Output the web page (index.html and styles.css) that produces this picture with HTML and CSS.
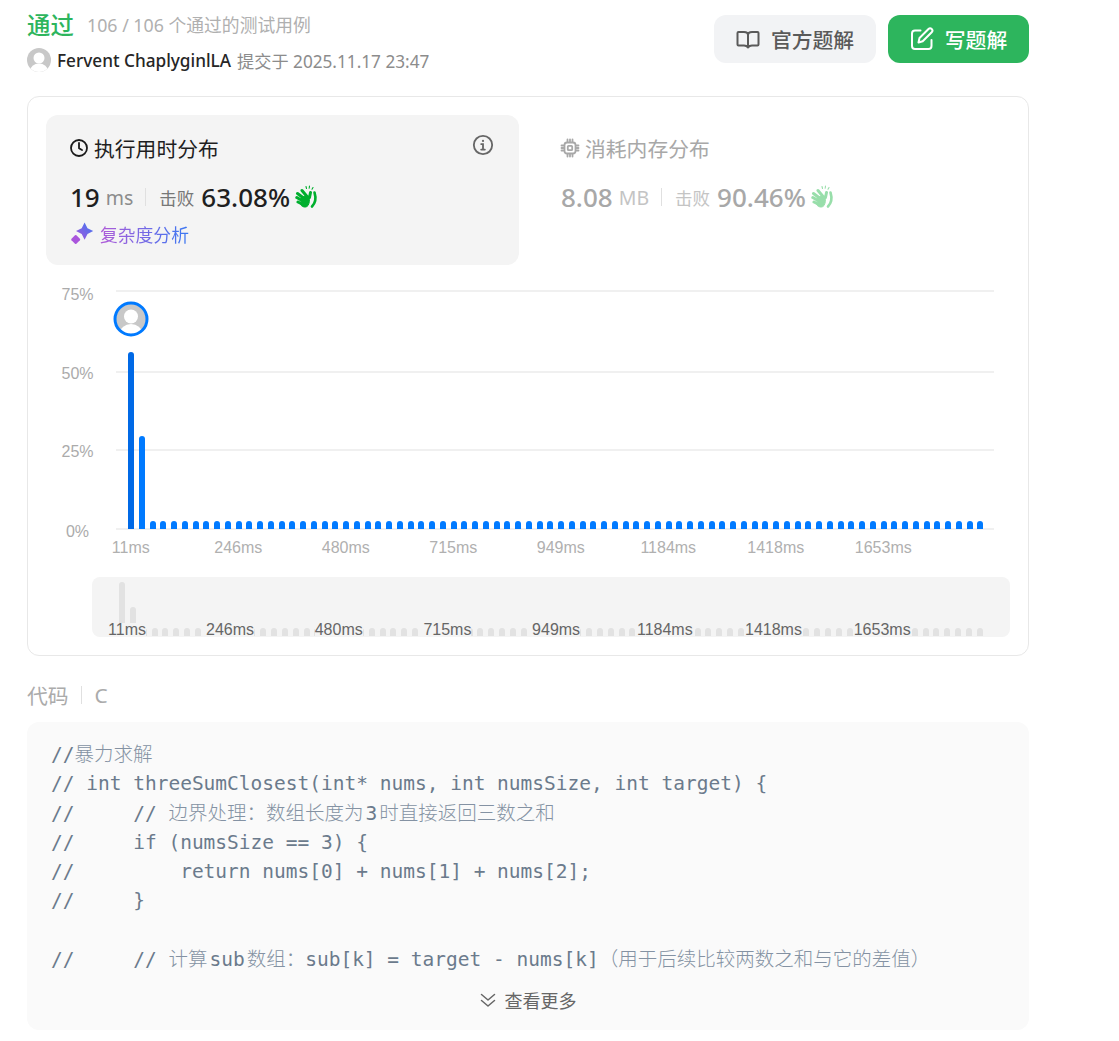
FILE: index.html
```html
<!DOCTYPE html>
<html lang="zh-CN">
<head>
<meta charset="utf-8">
<title>通过</title>
<link rel="stylesheet" href="styles.css">
</head>
<body>
<main class="page">
  <header class="head">
    <div class="head-info">
      <div class="status-row"><span class="status">通过</span><span class="cases">106 / 106 个通过的测试用例</span></div>
      <div class="author-row">
        <svg class="avatar" viewBox="0 0 24 24"><defs><clipPath id="a1"><circle cx="12" cy="12" r="12"/></clipPath></defs><g clip-path="url(#a1)"><rect width="24" height="24" fill="#c8c8c8"/><circle cx="12" cy="10" r="5.5" fill="#fff"/><ellipse cx="12" cy="23" rx="9" ry="7.5" fill="#fff"/></g></svg>
        <span class="author">Fervent ChaplyginlLA</span><span class="submitted">提交于 2025.11.17 23:47</span>
      </div>
    </div>
    <div class="actions">
      <button class="btn btn-gray"><svg class="btn-icon" viewBox="0 0 24 24" fill="none" stroke="currentColor" stroke-width="2" stroke-linejoin="round" stroke-linecap="round"><path d="M12 8c0-2-1.800-3-4-3H2.500a1 1 0 0 0-1 1v11.500a1 1 0 0 0 1 1H8c2 0 3.200.7 4 2zM12 8c0-2 1.800-3 4-3h5.500a1 1 0 0 1 1 1v11.500a1 1 0 0 1-1 1H16c-2 0-3.200.7-4 2z"/></svg>官方题解</button>
      <button class="btn btn-green"><svg class="btn-icon" viewBox="0 0 24 24" fill="none" stroke="currentColor" stroke-width="2" stroke-linejoin="round" stroke-linecap="round"><path d="M10.500 3.500H5a3 3 0 0 0-3 3V19a3 3 0 0 0 3 3h13.500a3 3 0 0 0 3-3v-6M8.500 15.500l1-4.500 9-9a2.200 2.200 0 0 1 3.200 3.200l-9 9z"/></svg>写题解</button>
    </div>
  </header>

  <section class="card">
    <div class="tabs">
      <div class="tab tab-active">
        <div class="tab-title"><svg class="tab-icon" viewBox="0 0 20 20" fill="none" stroke="#1a1a1a" stroke-width="1.800" stroke-linecap="round" stroke-linejoin="round"><circle cx="10" cy="10" r="8"/><path d="M10 5v5.300l3 1.700"/></svg>执行用时分布</div>
        <div class="metric"><span class="value">19</span><span class="unit">ms</span><span class="sep"></span><span class="beat">击败</span><span class="value">63.08%</span>
          <svg class="clap" viewBox="0 0 24 24" fill="none" stroke="#00af2e" stroke-linecap="round"><g stroke-width="3"><path d="M2.500 8.500l6 4.500M1.800 12.500l6 3.500M3 17l5 2.500M7 5.500l5 6M15.500 7.500l-1 5"/></g><path d="M7 12.500l3-1.500 4 1c.8 3 .5 6-1 8.500-2 2.500-5 1.800-7-.3z" fill="#00af2e" stroke="#00af2e"/><path d="M19.500 7.500c1.700 5.500 1.500 10-2.500 14" stroke-width="2.600"/><path d="M11 1.500l.5 2M14.500 1l-.3 2.200M18 2.500l-1 1.700" stroke-width="1.100"/></svg>
        </div>
        <div class="analysis"><svg class="spark" viewBox="0 0 24 24"><defs><linearGradient id="g1" x1="0" y1="1" x2="1" y2="0"><stop offset="0" stop-color="#a955dc"/><stop offset="1" stop-color="#3a78f2"/></linearGradient></defs><path fill="url(#g1)" d="M14.600.5l2.900 5.700 5.700 2.900-5.700 2.900-2.900 5.700-2.900-5.700L6 9.100l5.700-2.900z"/><path fill="#a955dc" d="M5 13.300a1 1 0 0 1 1.400 0l3.500 3.500a1 1 0 0 1 0 1.400l-3.500 3.500a1 1 0 0 1-1.400 0l-3.500-3.500a1 1 0 0 1 0-1.400z"/></svg><span class="analysis-text">复杂度分析</span></div>
        <svg class="info" viewBox="0 0 24 24" fill="none" stroke="#666" stroke-width="2" stroke-linecap="round"><circle cx="12" cy="12" r="10"/><path d="M10 11h2v6M10 17h4"/><circle cx="12" cy="7.500" r="1.200" fill="#666" stroke="none"/></svg>
      </div>
      <div class="tab tab-muted">
        <div class="tab-title"><svg class="tab-icon" viewBox="0 0 20 20" fill="none" stroke="currentColor" stroke-width="1.800" stroke-linecap="round"><rect x="4.500" y="4.500" width="11" height="11" rx="2.500"/><rect x="7.800" y="7.800" width="4.400" height="4.400" rx=".8"/><path d="M1.500 7.500h2M1.500 10h2M1.500 12.500h2M16.500 7.500h2M16.500 10h2M16.500 12.500h2M7.500 1.500v2M10 1.500v2M12.500 1.500v2M7.500 16.500v2M10 16.500v2M12.500 16.500v2"/></svg>消耗内存分布</div>
        <div class="metric"><span class="value">8.08</span><span class="unit">MB</span><span class="sep"></span><span class="beat">击败</span><span class="value">90.46%</span>
          <svg class="clap" viewBox="0 0 24 24" fill="none" stroke="#00af2e" stroke-linecap="round"><g stroke-width="3"><path d="M2.500 8.500l6 4.500M1.800 12.500l6 3.500M3 17l5 2.500M7 5.500l5 6M15.500 7.500l-1 5"/></g><path d="M7 12.500l3-1.500 4 1c.8 3 .5 6-1 8.500-2 2.500-5 1.800-7-.3z" fill="#00af2e" stroke="#00af2e"/><path d="M19.500 7.500c1.700 5.500 1.500 10-2.500 14" stroke-width="2.600"/><path d="M11 1.500l.5 2M14.500 1l-.3 2.200M18 2.500l-1 1.700" stroke-width="1.100"/></svg>
        </div>
      </div>
    </div>

    <div class="chart">
      <div class="rows">
        <div class="row"><span class="y-label y-top">75%</span><span class="line"></span></div>
        <div class="row"><span class="y-label">50%</span><span class="line"></span></div>
        <div class="row"><span class="y-label">25%</span><span class="line"></span></div>
        <div class="row"><span class="y-label y-zero">0%</span><span class="line"></span></div>
      </div>
      <div class="bars">
        <i class="bar bar-a"></i><i class="bar bar-b"></i>
        <i class="bar"></i><i class="bar"></i><i class="bar"></i><i class="bar"></i><i class="bar"></i><i class="bar"></i><i class="bar"></i><i class="bar"></i>
        <i class="bar"></i><i class="bar"></i><i class="bar"></i><i class="bar"></i><i class="bar"></i><i class="bar"></i><i class="bar"></i><i class="bar"></i><i class="bar"></i><i class="bar"></i>
        <i class="bar"></i><i class="bar"></i><i class="bar"></i><i class="bar"></i><i class="bar"></i><i class="bar"></i><i class="bar"></i><i class="bar"></i><i class="bar"></i><i class="bar"></i>
        <i class="bar"></i><i class="bar"></i><i class="bar"></i><i class="bar"></i><i class="bar"></i><i class="bar"></i><i class="bar"></i><i class="bar"></i><i class="bar"></i><i class="bar"></i>
        <i class="bar"></i><i class="bar"></i><i class="bar"></i><i class="bar"></i><i class="bar"></i><i class="bar"></i><i class="bar"></i><i class="bar"></i><i class="bar"></i><i class="bar"></i>
        <i class="bar"></i><i class="bar"></i><i class="bar"></i><i class="bar"></i><i class="bar"></i><i class="bar"></i><i class="bar"></i><i class="bar"></i><i class="bar"></i><i class="bar"></i>
        <i class="bar"></i><i class="bar"></i><i class="bar"></i><i class="bar"></i><i class="bar"></i><i class="bar"></i><i class="bar"></i><i class="bar"></i><i class="bar"></i><i class="bar"></i>
        <i class="bar"></i><i class="bar"></i><i class="bar"></i><i class="bar"></i><i class="bar"></i><i class="bar"></i><i class="bar"></i><i class="bar"></i><i class="bar"></i><i class="bar"></i>
      </div>
      <svg class="pin" viewBox="0 0 36 36"><defs><clipPath id="a2"><circle cx="18" cy="18" r="15"/></clipPath></defs><g clip-path="url(#a2)"><rect width="36" height="36" fill="#c8c8c8"/><circle cx="18" cy="15.500" r="7" fill="#fff"/><ellipse cx="18" cy="32" rx="11" ry="9" fill="#fff"/></g><circle cx="18" cy="18" r="16" fill="none" stroke="#007aff" stroke-width="3"/></svg>
      <div class="x-labels">
        <span>11ms</span><span>246ms</span><span>480ms</span><span>715ms</span><span>949ms</span><span>1184ms</span><span>1418ms</span><span>1653ms</span>
      </div>
      <div class="mini">
        <div class="mini-bars">
          <i class="mbar mbar-a"></i><i class="mbar mbar-b"></i>
          <i class="mbar"></i><i class="mbar"></i><i class="mbar"></i><i class="mbar"></i><i class="mbar"></i><i class="mbar"></i><i class="mbar"></i><i class="mbar"></i>
          <i class="mbar"></i><i class="mbar"></i><i class="mbar"></i><i class="mbar"></i><i class="mbar"></i><i class="mbar"></i><i class="mbar"></i><i class="mbar"></i><i class="mbar"></i><i class="mbar"></i>
          <i class="mbar"></i><i class="mbar"></i><i class="mbar"></i><i class="mbar"></i><i class="mbar"></i><i class="mbar"></i><i class="mbar"></i><i class="mbar"></i><i class="mbar"></i><i class="mbar"></i>
          <i class="mbar"></i><i class="mbar"></i><i class="mbar"></i><i class="mbar"></i><i class="mbar"></i><i class="mbar"></i><i class="mbar"></i><i class="mbar"></i><i class="mbar"></i><i class="mbar"></i>
          <i class="mbar"></i><i class="mbar"></i><i class="mbar"></i><i class="mbar"></i><i class="mbar"></i><i class="mbar"></i><i class="mbar"></i><i class="mbar"></i><i class="mbar"></i><i class="mbar"></i>
          <i class="mbar"></i><i class="mbar"></i><i class="mbar"></i><i class="mbar"></i><i class="mbar"></i><i class="mbar"></i><i class="mbar"></i><i class="mbar"></i><i class="mbar"></i><i class="mbar"></i>
          <i class="mbar"></i><i class="mbar"></i><i class="mbar"></i><i class="mbar"></i><i class="mbar"></i><i class="mbar"></i><i class="mbar"></i><i class="mbar"></i><i class="mbar"></i><i class="mbar"></i>
          <i class="mbar"></i><i class="mbar"></i><i class="mbar"></i><i class="mbar"></i><i class="mbar"></i><i class="mbar"></i><i class="mbar"></i><i class="mbar"></i><i class="mbar"></i><i class="mbar"></i>
        </div>
        <div class="mini-labels">
          <span class="mini-first"><em>11ms</em></span><span><em>246ms</em></span><span><em>480ms</em></span><span><em>715ms</em></span><span><em>949ms</em></span><span><em>1184ms</em></span><span><em>1418ms</em></span><span><em>1653ms</em></span>
        </div>
      </div>
    </div>
  </section>

  <div class="code-head"><span>代码</span><span class="code-sep"></span><span>C</span></div>
  <section class="code-box">
<pre class="code">//<span class="cn">暴力求解</span>
// int threeSumClosest(int* nums, int numsSize, int target) {
//     // <span class="cn cn-r">边界处理：数组长度为</span>3<span class="cn cn-l">时直接返回三数之和</span>
//     if (numsSize == 3) {
//         return nums[0] + nums[1] + nums[2];
//     }

//     // <span class="cn cn-r">计算</span>sub<span class="cn cn-l">数组：</span>sub[k] = target - nums[k]<span class="cn">（用于后续比较两数之和与它的差值）</span></pre>
    <div class="more"><svg class="more-icon" viewBox="0 0 16 16" fill="none" stroke="currentColor" stroke-width="1.500" stroke-linecap="round" stroke-linejoin="round"><path d="M1.500 2.500L8 8l6.500-5.500M1.500 8.500L8 14l6.500-5.500"/></svg>查看更多</div>
  </section>
</main>
</body>
</html>
```
FILE: styles.css
```css
* { box-sizing: border-box; }
html, body { margin: 0; background: #fff; }
body { font-family: "Noto Sans", "Noto Sans CJK SC", sans-serif; color: #262626; }
.page { width: 1002px; margin-left: 27px; height: 1041px; overflow: hidden; }

.head { display: flex; justify-content: space-between; height: 96px; padding-top: 15px; }
.head-info { display: flex; flex-direction: column; margin-top: -4px; }
.status-row { display: flex; align-items: center; height: 26px; white-space: nowrap; }
.status { font-size: 23.400px; font-weight: 500; color: #2db55d; width: 60px; }
.cases { font-size: 17.800px; color: #b0b0b0; }
.author-row { display: flex; align-items: center; margin-top: 11px; height: 24px; white-space: nowrap; }
.avatar { width: 24px; height: 24px; margin-right: 6px; }
.author { font-size: 17.200px; font-weight: 500; color: #262626; margin-right: 6px; }
.submitted { font-size: 17.200px; color: #8c8c8c; }

.actions { display: flex; gap: 12px; height: 48px; }
.btn { display: flex; align-items: center; justify-content: center; height: 48px; border: 0; padding: 0; border-radius: 12px; font: 500 20.800px "Noto Sans", "Noto Sans CJK SC", sans-serif; }
.btn-gray { width: 162px; background: #f2f3f5; color: #5a5a5a; }
.btn-green { width: 141px; background: #2db55d; color: #fff; }
.btn-icon { width: 24px; height: 24px; margin-right: 11px; }

.card { height: 560px; border: 1px solid #e8e8e8; border-radius: 12px; padding: 18px; }
.tabs { display: flex; height: 150px; }
.tab { position: relative; width: 473px; padding: 19px 24px 0; border-radius: 12px; }
.tab-active { background: #f4f4f4; }
.tab-muted { padding-left: 42px; color: #a8a8a8; }
.tab-title { display: flex; align-items: center; font-size: 20.800px; height: 28px; color: #1f1f1f; white-space: nowrap; }
.tab-muted .tab-title { color: #a8a8a8; }
.tab-icon { width: 20px; height: 20px; margin: 0 5px 0 -1px; }
.metric { display: flex; align-items: center; height: 34px; margin-top: 18px; white-space: nowrap; }
.value { font-size: 26px; font-weight: 500; color: #1f1f1f; }
.unit { font-size: 19.500px; color: #8c8c8c; margin-left: 6px; }
.sep { width: 1px; height: 18px; background: #e0e0e0; margin: 0 13px 0 12px; }
.beat { font-size: 17.500px; color: #777; margin-right: 7px; }
.tab-muted .value { color: #a8a8a8; }
.tab-muted .unit, .tab-muted .beat { color: #c4c4c4; }
.tab-muted .clap { opacity: .4; }
.clap { width: 24px; height: 24px; margin-left: 5px; }
.analysis { display: flex; align-items: center; height: 24px; margin-top: 8px; }
.spark { width: 24px; height: 24px; margin-right: 6px; }
.analysis-text { font-size: 17.800px; background: linear-gradient(90deg, #b05ad8, #3a78f2); -webkit-background-clip: text; background-clip: text; color: transparent; }
.info { position: absolute; top: 19px; right: 25px; width: 22px; height: 22px; }

.chart { position: relative; margin-top: 17px; height: 373px; }
.rows { display: grid; grid-template-rows: 81px 78px 79px 18px; }
.row { display: flex; align-items: center; height: 18px; }
.y-label { width: 63px; margin-right: 7px; text-align: center; font: 16px/18px "Liberation Sans", sans-serif; color: #ababab; transform: translateY(2px); }
.y-top { transform: translateY(4px); }
.y-zero { transform: translateY(3px); }
.line { flex: 1; height: 2px; margin-right: 16px; background: #f0f0f0; }

.bars { position: absolute; left: 82px; top: 0; width: 856px; height: 248px; padding-bottom: 1px; display: flex; justify-content: space-between; align-items: flex-end; }
.bar { width: 6px; height: 8px; background: #007aff; border-radius: 3px 3px 0 0; }
.bar-a { height: 177px; background: #0069e6; }
.bar-b { height: 93px; }
.pin { position: absolute; left: 67px; top: 19px; width: 36px; height: 36px; }

.x-labels { display: flex; margin: 0 0 0 31px; height: 22px; }
.x-labels span { width: 107.500px; text-align: center; font: 16px/20px "Liberation Sans", sans-serif; color: #b0b0b0; }

.mini { position: relative; margin: 17px 0 0 46px; width: 918px; height: 60px; background: #f4f4f4; border-radius: 8px; overflow: hidden; }
.mini-bars { display: flex; justify-content: space-between; align-items: flex-end; height: 59px; padding: 0 27px; }
.mbar { width: 6px; height: 8px; background: #e2e2e2; border-radius: 3px 3px 0 0; }
.mbar-a { height: 54px; }
.mbar-b { height: 29px; }
.mini-labels { position: absolute; left: -13.600px; bottom: 0; display: flex; }
.mini-labels span { width: 108.700px; text-align: center; font: 16px/14px "Liberation Sans", sans-serif; color: #666; }
.mini-labels .mini-first { width: 97.300px; }
.mini-labels em { display: inline-block; font-style: normal; background: #f4f4f4; }

.code-head { display: flex; align-items: center; height: 27px; margin-top: 25px; font-size: 20.800px; color: #ababab; }
.code-sep { width: 1px; height: 18px; background: #e0e0e0; margin: 0 13px 0 12px; }
.code-box { margin-top: 14px; height: 308px; background: #fafafa; border-radius: 12px; padding: 18px 24px 0; }
.code { margin: 0; font: 19.500px/29.300px "DejaVu Sans Mono", monospace; color: #6b7a8c; white-space: pre; }
.cn { font-family: "Noto Sans CJK SC", sans-serif; font-weight: 300; line-height: 0; color: #8492a3; }
.cn-r { margin-right: 2px; }
.cn-l { margin-left: 2px; }
.more { display: flex; align-items: center; justify-content: center; margin-top: 13px; height: 26px; font-size: 18px; color: #666; }
.more-icon { width: 16px; height: 16px; margin-right: 9px; }
```
